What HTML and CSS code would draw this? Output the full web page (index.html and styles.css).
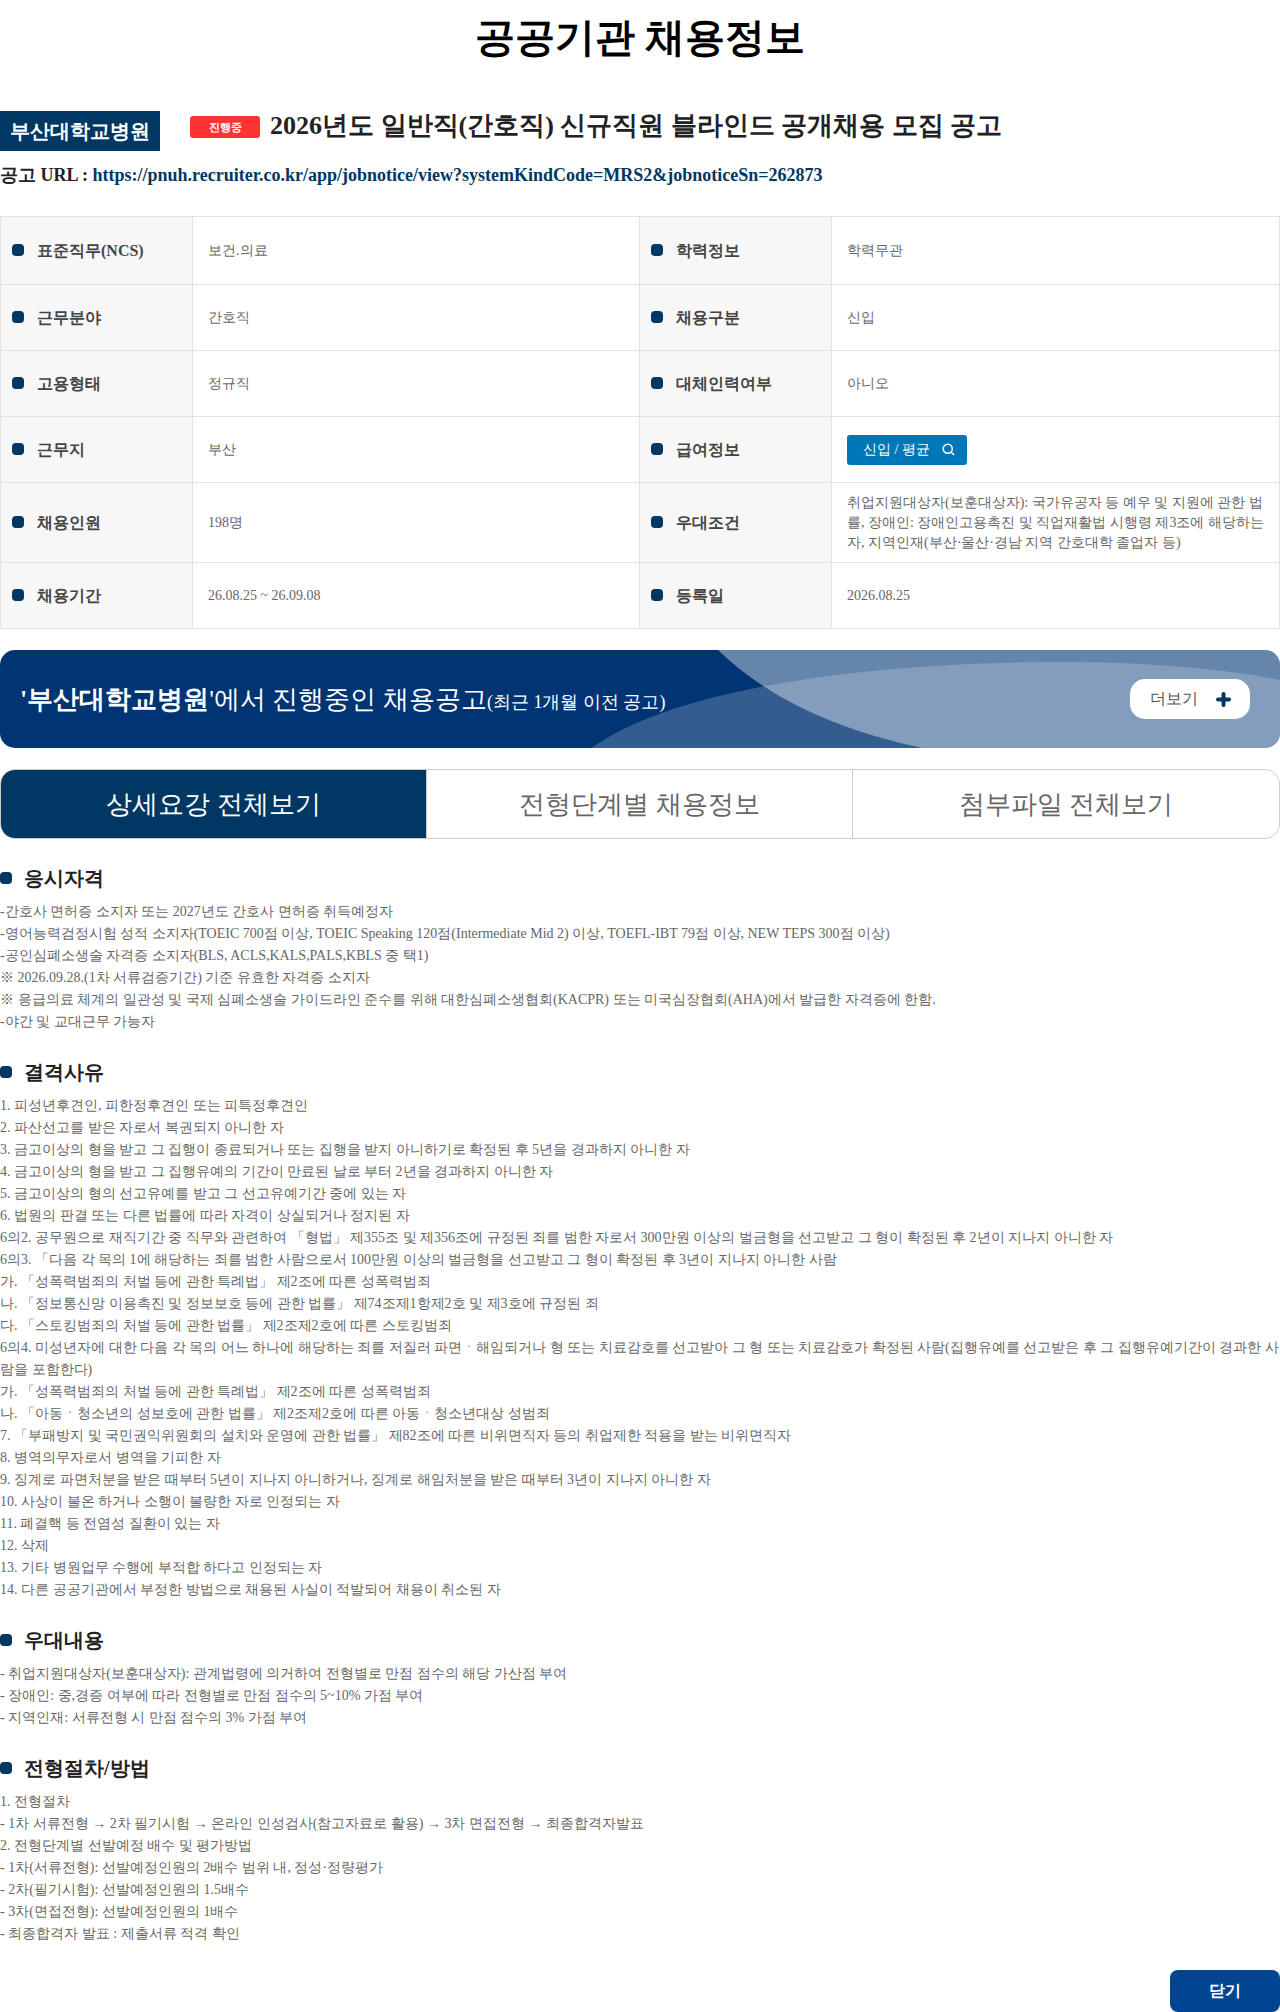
FILE: index.html
```html
<!DOCTYPE html>
<html lang="ko">
<head>
<meta charset="utf-8">
<title>공공기관 채용정보</title>
<link rel="stylesheet" href="styles.css">
</head>
<body>
<h1 class="page-title">공공기관 채용정보</h1>
<div class="job-head">
  <span class="org">부산대학교병원</span>
  <span class="state">진행중</span>
  <h2 class="job-title">2026년도 일반직(간호직) 신규직원 블라인드 공개채용 모집 공고</h2>
</div>
<p class="url">공고 URL : <a href="#">https://pnuh.recruiter.co.kr/app/jobnotice/view?systemKindCode=MRS2&amp;jobnoticeSn=262873</a></p>
<table class="info">
  <colgroup><col class="c-th"><col class="c-td"><col class="c-th2"><col></colgroup>
  <tr class="r1"><th><span class="lbl">표준직무(NCS)</span></th><td>보건.의료</td><th><span class="lbl">학력정보</span></th><td>학력무관</td></tr>
  <tr class="r2"><th><span class="lbl">근무분야</span></th><td>간호직</td><th><span class="lbl">채용구분</span></th><td>신입</td></tr>
  <tr class="r2"><th><span class="lbl">고용형태</span></th><td>정규직</td><th><span class="lbl">대체인력여부</span></th><td>아니오</td></tr>
  <tr class="r2"><th><span class="lbl">근무지</span></th><td>부산</td><th><span class="lbl">급여정보</span></th><td><a class="pay" href="#">신입 / 평균<svg width="13" height="13" viewBox="0 0 14 14" fill="none" stroke="#fff" stroke-width="1.6"><circle cx="6.2" cy="6.2" r="4.9"/><path d="M9.6 9.6 13 13"/></svg></a></td></tr>
  <tr class="r3"><th><span class="lbl">채용인원</span></th><td>198명</td><th><span class="lbl">우대조건</span></th><td>취업지원대상자(보훈대상자): 국가유공자 등 예우 및 지원에 관한 법률, 장애인: 장애인고용촉진 및 직업재활법 시행령 제3조에 해당하는 자, 지역인재(부산·울산·경남 지역 간호대학 졸업자 등)</td></tr>
  <tr class="r2"><th><span class="lbl">채용기간</span></th><td>26.08.25 ~ 26.09.08</td><th><span class="lbl">등록일</span></th><td>2026.08.25</td></tr>
</table>
<section class="banner">
  <svg class="banner-art" viewBox="0 0 1280 98" preserveAspectRatio="none" aria-hidden="true">
    <path d="M591 98C680 35 880 12 1061 12C1140 12 1220 18 1280 30V98Z" fill="#fff" fill-opacity=".2"/>
    <path d="M718 0Q790 70 922 98H1280V0Z" fill="#fff" fill-opacity=".4"/>
  </svg>
  <p class="banner-text"><b>'부산대학교병원</b>'에서 진행중인 채용공고<small>(최근 1개월 이전 공고)</small></p>
  <a class="more" href="#">더보기<svg width="15" height="15" viewBox="0 0 15 15" stroke="#003763" stroke-width="4" stroke-linecap="round"><path d="M7.500 2v11M2 7.500h11"/></svg></a>
</section>
<nav class="tabs">
  <a class="tab on" href="#">상세요강 전체보기</a>
  <a class="tab" href="#">전형단계별 채용정보</a>
  <a class="tab" href="#">첨부파일 전체보기</a>
</nav>
<section class="sec">
  <h3>응시자격</h3>
  <p>-간호사 면허증 소지자 또는 2027년도 간호사 면허증 취득예정자<br>
  -영어능력검정시험 성적 소지자(TOEIC 700점 이상, TOEIC Speaking 120점(Intermediate Mid 2) 이상, TOEFL-IBT 79점 이상, NEW TEPS 300점 이상)<br>
  -공인심폐소생술 자격증 소지자(BLS, ACLS,KALS,PALS,KBLS 중 택1)<br>
  ※ 2026.09.28.(1차 서류검증기간) 기준 유효한 자격증 소지자<br>
  ※ 응급의료 체계의 일관성 및 국제 심폐소생술 가이드라인 준수를 위해 대한심폐소생협회(KACPR) 또는 미국심장협회(AHA)에서 발급한 자격증에 한함.<br>
  -야간 및 교대근무 가능자</p>
</section>
<section class="sec">
  <h3>결격사유</h3>
  <p>1. 피성년후견인, 피한정후견인 또는 피특정후견인<br>
  2. 파산선고를 받은 자로서 복권되지 아니한 자<br>
  3. 금고이상의 형을 받고 그 집행이 종료되거나 또는 집행을 받지 아니하기로 확정된 후 5년을 경과하지 아니한 자<br>
  4. 금고이상의 형을 받고 그 집행유예의 기간이 만료된 날로 부터 2년을 경과하지 아니한 자<br>
  5. 금고이상의 형의 선고유예를 받고 그 선고유예기간 중에 있는 자<br>
  6. 법원의 판결 또는 다른 법률에 따라 자격이 상실되거나 정지된 자<br>
  6의2. 공무원으로 재직기간 중 직무와 관련하여 「형법」 제355조 및 제356조에 규정된 죄를 범한 자로서 300만원 이상의 벌금형을 선고받고 그 형이 확정된 후 2년이 지나지 아니한 자<br>
  6의3. 「다음 각 목의 1에 해당하는 죄를 범한 사람으로서 100만원 이상의 벌금형을 선고받고 그 형이 확정된 후 3년이 지나지 아니한 사람<br>
  가. 「성폭력범죄의 처벌 등에 관한 특례법」 제2조에 따른 성폭력범죄<br>
  나. 「정보통신망 이용촉진 및 정보보호 등에 관한 법률」 제74조제1항제2호 및 제3호에 규정된 죄<br>
  다. 「스토킹범죄의 처벌 등에 관한 법률」 제2조제2호에 따른 스토킹범죄<br>
  6의4. 미성년자에 대한 다음 각 목의 어느 하나에 해당하는 죄를 저질러 파면ㆍ해임되거나 형 또는 치료감호를 선고받아 그 형 또는 치료감호가 확정된 사람(집행유예를 선고받은 후 그 집행유예기간이 경과한 사람을 포함한다)<br>
  가. 「성폭력범죄의 처벌 등에 관한 특례법」 제2조에 따른 성폭력범죄<br>
  나. 「아동ㆍ청소년의 성보호에 관한 법률」 제2조제2호에 따른 아동ㆍ청소년대상 성범죄<br>
  7. 「부패방지 및 국민권익위원회의 설치와 운영에 관한 법률」 제82조에 따른 비위면직자 등의 취업제한 적용을 받는 비위면직자<br>
  8. 병역의무자로서 병역을 기피한 자<br>
  9. 징계로 파면처분을 받은 때부터 5년이 지나지 아니하거나, 징계로 해임처분을 받은 때부터 3년이 지나지 아니한 자<br>
  10. 사상이 불온 하거나 소행이 불량한 자로 인정되는 자<br>
  11. 폐결핵 등 전염성 질환이 있는 자<br>
  12. 삭제<br>
  13. 기타 병원업무 수행에 부적합 하다고 인정되는 자<br>
  14. 다른 공공기관에서 부정한 방법으로 채용된 사실이 적발되어 채용이 취소된 자</p>
</section>
<section class="sec">
  <h3>우대내용</h3>
  <p>- 취업지원대상자(보훈대상자): 관계법령에 의거하여 전형별로 만점 점수의 해당 가산점 부여<br>
  - 장애인: 중,경증 여부에 따라 전형별로 만점 점수의 5~10% 가점 부여<br>
  - 지역인재: 서류전형 시 만점 점수의 3% 가점 부여</p>
</section>
<section class="sec">
  <h3>전형절차/방법</h3>
  <p>1. 전형절차<br>
  - 1차 서류전형 → 2차 필기시험 → 온라인 인성검사(참고자료로 활용) → 3차 면접전형 → 최종합격자발표<br>
  2. 전형단계별 선발예정 배수 및 평가방법<br>
  - 1차(서류전형): 선발예정인원의 2배수 범위 내, 정성·정량평가<br>
  - 2차(필기시험): 선발예정인원의 1.5배수<br>
  - 3차(면접전형): 선발예정인원의 1배수<br>
  - 최종합격자 발표 : 제출서류 적격 확인</p>
</section>
<div class="foot"><a class="close" href="#">닫기</a></div>
</body>
</html>
```
FILE: styles.css
```css
* { box-sizing: border-box; }
html, body { margin: 0; padding: 0; }
body {
  font-family: "Liberation Serif", serif;
  font-size: 14px;
  color: #666;
  background: #fff;
  word-break: break-all;
}
a { text-decoration: none; }
.page-title {
  margin: 0;
  padding-top: 10px;
  height: 111px;
  text-align: center;
  font-size: 40px;
  line-height: 56px;
  font-weight: 700;
  color: #000;
}
.job-head { display: flex; align-items: flex-start; height: 40px; }
.org {
  width: 160px;
  height: 40px;
  background: #003763;
  color: #fff;
  font-size: 20px;
  font-weight: 700;
  line-height: 40px;
  text-align: center;
  white-space: nowrap;
}
.state {
  width: 70px;
  height: 22px;
  margin: 5px 10px 0 30px;
  background: #f33;
  color: #fff;
  font-size: 11px;
  font-weight: 700;
  line-height: 22px;
  text-align: center;
  border-radius: 3px;
}
.job-title {
  margin: -1px 0 0;
  font-size: 26px;
  line-height: 32px;
  font-weight: 700;
  color: #222;
}
.url {
  margin: 12px 0 0;
  height: 53px;
  font-size: 18px;
  line-height: 24px;
  font-weight: 700;
  color: #222;
}
.url a { color: #003763; }
.info {
  width: 1280px;
  border-collapse: collapse;
  table-layout: fixed;
  border: 1px solid #d0d0d0;
}
.c-th { width: 192px; }
.c-td { width: 447px; }
.c-th2 { width: 192px; }
.info th, .info td { border: 1px solid #e3e3e3; }
.info th {
  background: #f7f7f7;
  padding: 1px 0 0 11px;
  text-align: left;
  font-size: 16px;
  color: #444;
}
.info td { padding: 0 10px 0 15px; line-height: 20px; }
.r1 { height: 68px; }
.r2 { height: 66px; }
.r3 { height: 80px; }
.lbl { display: flex; align-items: center; gap: 13px; }
.lbl::before {
  content: "";
  width: 12px;
  height: 12px;
  margin-top: -2px;
  border-radius: 4px;
  background: #003763;
}
.pay {
  display: inline-flex;
  align-items: center;
  gap: 12px;
  width: 120px;
  height: 30px;
  padding-left: 16px;
  vertical-align: middle;
  background: #0077b6;
  color: #fff;
  border-radius: 3px;
}
.banner {
  position: relative;
  display: flex;
  align-items: center;
  justify-content: space-between;
  height: 98px;
  margin-top: 21px;
  padding: 0 30px 0 20px;
  background: #003473;
  border-radius: 15px;
  overflow: hidden;
}
.banner-art { position: absolute; left: 0; top: 0; width: 100%; height: 100%; }
.banner-text {
  position: relative;
  margin: 0;
  font-size: 26px;
  color: #fff;
  white-space: nowrap;
}
.banner-text b { font-weight: 700; }
.banner-text small { font-size: 18px; }
.more {
  position: relative;
  display: flex;
  align-items: center;
  justify-content: center;
  gap: 18px;
  width: 120px;
  height: 40px;
  background: #fff;
  color: #555;
  font-size: 16px;
  border-radius: 15px;
}
.tabs {
  display: flex;
  height: 70px;
  margin-top: 21px;
  border: 1px solid #ccc;
  border-radius: 15px;
  overflow: hidden;
}
.tab {
  flex: 1;
  display: flex;
  align-items: center;
  justify-content: center;
  font-size: 26px;
  color: #666;
  border-left: 1px solid #ccc;
}
.tab.on { flex: 0 0 425px; background: #003763; color: #fff; border-left: 0; }
.tab.on + .tab { flex: 0 0 426px; }
.sec { margin-bottom: 25px; }
.sec h3 {
  display: flex;
  align-items: center;
  gap: 12px;
  margin: 26px 0 10px;
  font-size: 20px;
  line-height: 26px;
  font-weight: 700;
  color: #222;
}
.sec h3::before {
  content: "";
  width: 12px;
  height: 12px;
  border-radius: 4px;
  background: #003763;
}
.sec p { margin: 0; line-height: 22px; }
.foot { display: flex; justify-content: flex-end; margin-top: 1px; }
.close {
  width: 110px;
  height: 42px;
  background: #004590;
  color: #fff;
  font-size: 16px;
  font-weight: 700;
  line-height: 42px;
  text-align: center;
  border-radius: 8px;
}
```
